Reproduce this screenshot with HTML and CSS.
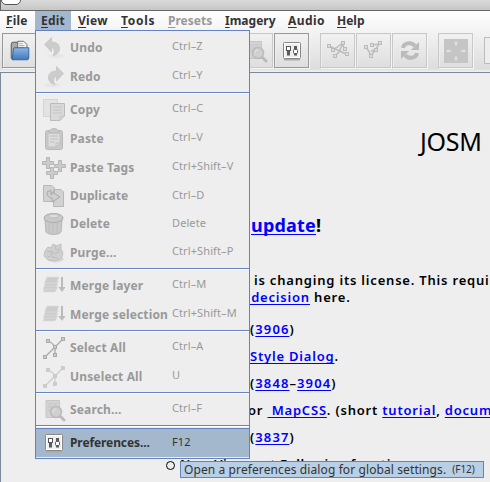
FILE: index.html
```html
<!DOCTYPE html>
<html lang="en">
<head>
<meta charset="utf-8">
<title>JOSM</title>
<link rel="stylesheet" href="styles.css">
</head>
<body>
<svg class="defs" width="0" height="0">
  <defs>
    <linearGradient id="blue" x1="0" y1="0" x2="0" y2="1"><stop offset="0" stop-color="#8db7e6"/><stop offset="1" stop-color="#3f78b8"/></linearGradient>
    <symbol id="undo" viewBox="0 0 24 24"><ellipse cx="14" cy="20" rx="8" ry="2" fill="#e6e6e6"/><path d="M2.500 8.500L9.500 1.500V6C15 6 18 9 17.500 13.500C17 17 14 19 11 19.500C13 17 13 12.500 9.500 11.500V16Z" fill="#ccc" stroke="#c1c1c1" stroke-width=".7"/></symbol>
    <symbol id="sliders" viewBox="0 0 24 24"><path d="M4 20.500H20" stroke="#aaa" stroke-width="2"/><rect x="3.500" y="3.500" width="17" height="16" rx="1" fill="#fff" stroke="#888"/><rect x="5" y="5" width="14" height="13" fill="#eee"/><path d="M8.500 8V16.500M15.500 7V16.500" stroke="#555c5c" stroke-width="3"/><rect x="6.500" y="7.500" width="4" height="4" fill="#fff" stroke="#555"/><rect x="13.500" y="10.500" width="4" height="4" rx="1" fill="#fff" stroke="#555"/></symbol>
    <symbol id="search" viewBox="0 0 24 24"><path d="M4 2.500H17.500V19.500H4Z" fill="#d3d3d3" stroke="#c6c6c6"/><path d="M6 6H15M6 9H12M6 12H10" stroke="#c5c5c5"/><path d="M17 17L22 22" stroke="#bbb" stroke-width="3" stroke-linecap="round"/><circle cx="14" cy="14" r="5.500" fill="#d0d0d0" stroke="#bbb" stroke-width="1.500"/><path d="M11 14Q11 11 14 11" stroke="#e2e2e2" fill="none"/></symbol>
    <symbol id="layers" viewBox="0 0 24 24"><g fill="#ccc" stroke="#dedede" stroke-width=".7"><path d="M1 18L3 13H16L13 18Z"/><path d="M1 15L3.500 10H16L13.500 15Z"/><path d="M2 12L4 7H16.500L14 12Z"/><path d="M2.500 9L5 3H17L14.500 9Z"/></g><path d="M20 3V14" stroke="#bbb" stroke-width="2"/><path d="M16.500 13H23.500L20 18Z" fill="#bbb"/></symbol>
    <symbol id="nodes" viewBox="0 0 24 24"><path d="M3 21L13 11L21 3M6 5Q11 7 13 11V19" fill="none" stroke="currentColor" stroke-width="1.300"/><g fill="#ccc" stroke="currentColor"><rect x="1.500" y="19.500" width="3" height="3"/><rect x="4.500" y="3.500" width="3" height="3"/><rect x="19.500" y="1.500" width="3" height="3"/><rect x="11.500" y="9.500" width="3" height="3"/><rect x="11.500" y="17.500" width="3" height="3"/></g></symbol>
  </defs>
</svg>
<div class="window">
  <div class="titlebar"><span class="knob"></span></div>
  <div class="chrome">
    <div class="menubar">
      <span class="m file"><u>F</u>ile</span><span class="m edit"><u>E</u>dit</span><span class="m view"><u>V</u>iew</span><span class="m tools"><u>T</u>ools</span><span class="m presets"><u>P</u>resets</span><span class="m imagery"><u>I</u>magery</span><span class="m audio"><u>A</u>udio</span><span class="m help"><u>H</u>elp</span>
    </div>
    <div class="toolbar">
      <span class="btn on"><svg viewBox="-1 -1 26 26"><path d="M2.500 20V4.500Q2.500 2.500 4.500 2.500H10V20Z" fill="#aaa" stroke="#555"/><path d="M9.500 11V1.500H16L19.500 5V11Z" fill="#f6f6f6" stroke="#666"/><path d="M11 4H15M11 6H17M11 8H17" stroke="#aaa"/><path d="M3.500 21.500L5 9.500Q5.200 8.500 6 8.500H21.500V19Q21.500 21.500 20 21.500Z" fill="url(#blue)" stroke="#2c60a0"/></svg></span>
      <span class="btn after-menu"><svg><use href="#search"/></svg></span>
      <span class="btn on"><svg><use href="#sliders"/></svg></span>
      <span class="btn group"><svg viewBox="0 0 24 24"><g fill="none" stroke="#bbb" stroke-width="1.500"><path d="M3 7L20 15M7 11L17 4M17 4L13 13L8 18M16 4L19 11"/></g><g fill="#ddd" stroke="#bbb"><rect x="1.500" y="5.500" width="3" height="3"/><rect x="5.500" y="9.500" width="3" height="3"/><rect x="15.500" y="2.500" width="3" height="3"/><rect x="19.500" y="13.500" width="3" height="3"/><rect x="17.500" y="8.500" width="3" height="3"/><rect x="7.500" y="15.500" width="3" height="3"/></g></svg></span>
      <span class="btn"><svg viewBox="0 0 24 24"><path d="M4 8Q7 12 9 17L18 4M10 6L17 5M9 12L13 11" fill="none" stroke="#bbb" stroke-width="1.500"/><g fill="#ddd" stroke="#bbb"><rect x="2.500" y="6.500" width="3" height="3"/><rect x="8.500" y="4.500" width="3" height="3"/><rect x="16.500" y="2.500" width="3" height="3"/><rect x="12.500" y="9.500" width="3" height="3"/><rect x="7.500" y="15.500" width="3" height="3"/></g></svg></span>
      <span class="btn"><svg viewBox="0 0 24 24"><path d="M5 9C6 3 14 3 17 7M19 14C18 20 10 20 7 16" fill="none" stroke="#bbb" stroke-width="4"/><path d="M21 3V11H13ZM3 20V12H11Z" fill="#bbb"/></svg></span>
      <span class="btn group"><svg viewBox="0 0 24 24"><path d="M0 0H24V24H0Z" fill="#c5c5c5"/><path d="M12 2L14 4.500H12.700V7H11.300V4.500H10ZM12 22L14 19.500H12.700V17H11.300V19.500H10ZM2 12L4.500 10V11.300H7V12.700H4.500V14ZM22 12L19.500 10V11.300H17V12.700H19.500V14Z" fill="#e2e2e2"/></svg></span>
      <span class="combo"></span>
    </div>
  </div>
  <div class="page">
    <h1>JOSM</h1>
    <h2><a>update</a>!</h2>
    <p class="l1">is changing its license. This requires</p>
    <p class="l2"><a>&nbsp;decision</a> here.</p>
    <p class="l3">(<a>3906</a>)</p>
    <p class="l4"><a>Style Dialog</a>.</p>
    <p class="l5">(<a>3848</a>–<a>3904</a>)</p>
    <p class="l6">or <a>&nbsp;MapCSS</a>. (short <a>tutorial</a>, <a>documentation</a>)</p>
    <p class="l7">(<a>3837</a>)</p>
    <p class="l8"><i class="bullet"></i><span>New Viewport Following function: moves</span></p>
  </div>
</div>
<div class="menu">
  <div class="item"><svg><use href="#undo"/></svg><b>Undo</b><kbd>Ctrl–Z</kbd></div>
  <div class="item"><svg class="flip"><use href="#undo"/></svg><b>Redo</b><kbd>Ctrl–Y</kbd></div>
  <hr>
  <div class="item"><svg viewBox="0 0 24 24"><path d="M1.500 1.500H15.500V18.500H1.500Z" fill="#e3e3e3" stroke="#d4d4d4"/><path d="M8.500 5.500H22.500V18L18 22.500H8.500Z" fill="#d9d9d9" stroke="#bbb"/><path d="M18 22V18H22M11 9H20M11 12H20M11 15H20" stroke="#c5c5c5" fill="none"/></svg><b>Copy</b><kbd>Ctrl–C</kbd></div>
  <div class="item"><svg viewBox="0 0 24 24"><rect x="3.500" y="3.500" width="17" height="19" rx="2" fill="#c9c9c9" stroke="#b8b8b8"/><path d="M6 6H18V16L14 20H6Z" fill="#ddd" stroke="#c0c0c0"/><path d="M7 4Q12-1 17 4V6H7Z" fill="#c9c9c9" stroke="#b8b8b8"/><path d="M8 9H16M8 12H16M8 15H13M14 20V16H18" fill="none" stroke="#c0c0c0"/></svg><b>Paste</b><kbd>Ctrl–V</kbd></div>
  <div class="item tags"><svg viewBox="0 0 24 24"><g fill="#ccc" stroke="#b5b5b5"><path d="M4.500 1.500H7.500V5.500H11.500V8.500H7.500V12.500H4.500V8.500H.500V5.500H4.500Z"/><path d="M16.500 4.500H19.500V8.500H23.500V11.500H19.500V15.500H16.500V11.500H12.500V8.500H16.500Z"/><path d="M8.500 11.500H11.500V15.500H15.500V18.500H11.500V22.500H8.500V18.500H4.500V15.500H8.500Z"/></g></svg><b>Paste Tags</b><kbd>Ctrl+Shift–V</kbd></div>
  <div class="item short"><svg viewBox="0 0 24 24"><path d="M1.500 1.500H10L12.500 4V17.500H1.500ZM11.500 5.500H19L21.500 8V22.500H11.500Z" fill="#d2d2d2" stroke="#b8b8b8"/><path d="M5 8Q5 14 10 14V18L18 13L10 8V11Q8 11 9 6Z" fill="#cfcfcf" stroke="#aaa"/></svg><b>Duplicate</b><kbd>Ctrl–D</kbd></div>
  <div class="item short"><svg viewBox="0 0 24 24"><path d="M3 8H20L19 20Q17 22.500 11.500 22.500T4 20Z" fill="#c9c9c9" stroke="#b5b5b5"/><path d="M7 11V21M11 11V21M15 11V21" stroke="#bcbcbc"/><ellipse cx="11.500" cy="6" rx="9.500" ry="4.500" fill="#c9c9c9" stroke="#aaa"/><ellipse cx="11.500" cy="4" rx="5" ry="2" fill="#ddd" stroke="#bbb"/></svg><b>Delete</b><kbd>Delete</kbd></div>
  <div class="item"><svg viewBox="0 0 24 24"><ellipse cx="14" cy="18" rx="8" ry="3.500" fill="#ddd"/><path d="M3 10L6 6L9 7L11 3L15 5L19 3L19 8L21 12L19 18L13 20L6 19L2 15Z" fill="#d0d0d0" stroke="#c0c0c0"/><path d="M5 11L9 10L13 13L18 10M9 10L10 16L16 17M13 5L14 9L18 8M5 15L8 16" fill="none" stroke="#bdbdbd"/></svg><b>Purge...</b><kbd>Ctrl+Shift–P</kbd></div>
  <hr>
  <div class="item"><svg><use href="#layers"/></svg><b>Merge layer</b><kbd>Ctrl–M</kbd></div>
  <div class="item"><svg><use href="#layers"/></svg><b>Merge selection</b><kbd>Ctrl+Shift–M</kbd></div>
  <hr>
  <div class="item"><svg class="dark"><use href="#nodes"/></svg><b>Select All</b><kbd>Ctrl–A</kbd></div>
  <div class="item"><svg class="pale"><use href="#nodes"/></svg><b>Unselect All</b><kbd>U</kbd></div>
  <hr>
  <div class="item"><svg><use href="#search"/></svg><b>Search...</b><kbd>Ctrl–F</kbd></div>
  <hr>
  <div class="item selected"><svg><use href="#sliders"/></svg><b>Preferences...</b><kbd>F12</kbd></div>
</div>
<div class="tooltip"><span>Open a preferences dialog for global settings.</span><small>(F12)</small></div>
</body>
</html>
```
FILE: styles.css
```css
* { box-sizing: border-box; }
body { margin: 0; width: 490px; height: 482px; overflow: hidden; position: relative; background: #eee; font-family: "Noto Sans", "Open Sans", sans-serif; color: #333; }
.defs { position: absolute; }
.window { height: 482px; display: flex; flex-direction: column; }
.titlebar { height: 11px; flex: none; background: linear-gradient(#dadada, #c6c6c6); border-bottom: 1px solid #666; border-left: 1px solid #666; overflow: hidden; }
.knob { display: block; width: 20px; height: 11px; margin-top: -6px; border: 1px solid #555; border-radius: 5px; background: #fff; }
.chrome { height: 61px; flex: none; background: linear-gradient(#fff, #ddd 58px, #eee 60px); }
.menubar { height: 19px; display: flex; font-size: 12px; font-weight: 700; line-height: 19px; }
.m { flex: none; padding-left: 6px; white-space: nowrap; }
.m u { text-underline-offset: 2px; text-decoration-thickness: 1px; text-decoration-skip-ink: none; }
.file { width: 35px; letter-spacing: .2px; }
.edit { width: 36px; background: #a3b8cc; letter-spacing: .2px; }
.view { width: 44px; padding-left: 7px; letter-spacing: .3px; }
.tools { width: 47px; letter-spacing: .7px; }
.presets { width: 57px; color: #999; }
.imagery { width: 63px; }
.audio { width: 49px; letter-spacing: .4px; }
.toolbar { display: flex; padding: 3px 0 0 2px; height: 42px; }
.btn { width: 35px; height: 35px; flex: none; border: 1px solid #c8c8c8; box-shadow: 1px 1px #f5f5f5, inset 1px 1px #eee; display: flex; align-items: center; justify-content: center; margin-right: 1px; }
.btn svg { width: 24px; height: 24px; }
.btn.on { border-color: #999; }
.after-menu { margin-left: 200px; }
.group { margin-left: 10px; }
.combo { width: 20px; height: 27px; flex: none; margin: 4px 0 0 10px; background: #eee; border: 1px solid #bbb; }
.page { flex: 1; border-top: 1px solid #7a8a99; border-left: 1px solid #7a8a99; color: #000; font-size: 13px; font-weight: 600; overflow: hidden; }
.page > * { margin: 0; white-space: nowrap; }
.page a { color: #00f; text-decoration: underline; text-underline-offset: 2px; text-decoration-thickness: 1px; text-decoration-skip-ink: none; }
h1 { padding: 52px 0 0 419px; font-size: 25px; line-height: 32px; font-weight: 400; letter-spacing: -.3px; }
h2 { padding: 56px 0 0 250px; font-size: 18px; line-height: 24px; font-weight: 700; letter-spacing: .2px; }
.page p { line-height: 17px; padding-left: 249px; margin-top: 10px; letter-spacing: .8px; }
.page .l1 { padding-left: 253px; margin-top: 35px; }
.page .l2 { margin-top: 0; padding-left: 246px; }
.page .l3 { margin-top: 15px; }
.page .l6 { padding-left: 247px; }
.page .l3, .page .l5, .page .l7 { letter-spacing: 1.1px; }
.page .l8 { display: flex; padding-left: 165px; letter-spacing: .6px; }
.bullet { width: 9px; height: 9px; flex: none; margin: 5px 5px 0 0; border: 1.500px solid #000; border-radius: 50%; }
.menu { position: absolute; left: 35px; top: 30px; width: 215px; height: 429px; border: 1px solid #6382bf; background: #eee; padding-top: 2px; }
.item { height: 29px; display: grid; grid-template-columns: 24px 102px 1fr; align-items: center; padding-left: 6px; color: #999; white-space: nowrap; }
.item.short { height: 28px; }
.item svg { width: 24px; height: 24px; }
.item b { padding-left: 4px; font-size: 12px; line-height: 18px; letter-spacing: .15px; }
.item kbd { padding-left: 4px; font: 11px/16px "Noto Sans", sans-serif; margin-top: -3px; letter-spacing: .1px; }
.flip { transform: scaleX(-1); }
.dark { color: #aaa; }
.pale { color: #ccc; }
.menu hr { height: 2px; margin: 1px 0; border: 0; border-top: 1px solid #6382bf; background: #fff; }
.item.selected { background: #a3b8cc; color: #333; border-top: 1px solid #6382bf; }
.selected b { letter-spacing: -.1px; }
.tooltip { position: absolute; left: 180px; top: 461px; width: 304px; height: 17px; background: #b8cfe5; border: 1px solid #6382bf; display: flex; align-items: center; padding-left: 3px; font-size: 12px; line-height: 15px; white-space: nowrap; }
.tooltip span { letter-spacing: .1px; }
.tooltip small { font-size: 10px; margin-left: 6px; }
```
